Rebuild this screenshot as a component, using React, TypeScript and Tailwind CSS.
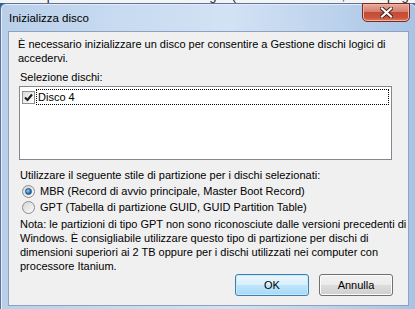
import type { ReactNode } from "react";

const FONT = "font-['Liberation_Sans',Arial,sans-serif]";

function Radio({ checked }: { checked?: boolean }) {
  return (
    <span className="flex h-[13px] w-[13px] shrink-0 items-center justify-center rounded-full border border-[#8c8c8c] bg-gradient-to-br from-[#d6d6d6] to-[#fbfbfb]">
      {checked && (
        <span className="h-[7px] w-[7px] rounded-full border border-[#1e4f7d] bg-[radial-gradient(circle_at_35%_35%,#8fd0f5,#2a76b8_60%,#1c4f86)]" />
      )}
    </span>
  );
}

function Check() {
  return (
    <span className="flex h-[13px] w-[13px] shrink-0 items-center justify-center border border-[#8e8f8f] bg-gradient-to-br from-[#dcdcdc] to-white">
      <svg width="9" height="9" viewBox="0 0 9 9">
        <path d="M1 4.5 L3.5 7 L8 1.5" fill="none" stroke="#1a1a1a" strokeWidth="2" />
      </svg>
    </span>
  );
}

function Button({ children, primary }: { children: ReactNode; primary?: boolean }) {
  return (
    <button
      className={`h-[22px] w-[74px] rounded-[3px] border text-[11px] text-black ${
        primary
          ? "border-[#3c7fb1] bg-[linear-gradient(#eaf6fd,#d9f0fc_50%,#bee6fd_50%,#a7d9f5)] shadow-[inset_0_0_0_1px_#cbe9fb]"
          : "border-[#707070] bg-[linear-gradient(#f2f2f2,#ebebeb_50%,#dddddd_50%,#cfcfcf)] shadow-[inset_0_0_0_1px_#fcfcfc]"
      }`}
    >
      {children}
    </button>
  );
}

export default function App() {
  return (
    <div className={`h-[309px] w-[415px] overflow-hidden bg-[#2c5f9c] ${FONT} text-[11px] leading-[14px] text-black`}>
      {/* bottom edge of the window behind */}
      <div className="h-[3px] overflow-hidden bg-[#f4f4f4]">
        <div className="-mt-[11px] whitespace-nowrap pl-[20px] text-[13px] leading-[14px] text-[#222]">
          Semplice &nbsp;Base &nbsp;NTFS &nbsp;&nbsp;&nbsp;&nbsp;&nbsp;&nbsp;&nbsp;&nbsp;&nbsp;Integro (Partizione di avvio, File di paging, Dump di arresto, Parti
        </div>
      </div>

      <div className="flex h-[320px] w-[417px] flex-col rounded-t-[6px] border border-[#5a7597] bg-[linear-gradient(90deg,#b9cfe9,#c8dbf1_30%,#d3e2f4_55%,#bcd2ec_80%,#a9c3e4)] px-[7px] shadow-[inset_0_0_0_1px_#e3edf9]">
        <div className="flex h-[27px] shrink-0 items-start justify-between">
          <span className="mt-[7px] pl-[1px] text-[11.5px] text-black">Inizializza disco</span>
          <div className="-mr-[1px] -mt-[1px] flex h-[19px] w-[48px] items-center justify-center rounded-b-[5px] border border-[#7a2b20] bg-[linear-gradient(#e9a99b,#d47f6e_45%,#c44a36_50%,#c8553e_80%,#d87a5e)] shadow-[inset_0_0_0_1px_#f0b4a6]">
            <svg width="13" height="11" viewBox="0 0 13 11">
              <path d="M2 1.5 L11 9.5 M11 1.5 L2 9.5" stroke="#4a1a14" strokeWidth="4" strokeLinecap="square" />
              <path d="M2 1.5 L11 9.5 M11 1.5 L2 9.5" stroke="#ffffff" strokeWidth="2.2" strokeLinecap="square" />
            </svg>
          </div>
        </div>

        <div className="flex h-[275px] shrink-0 flex-col border border-[#8ba3c1] bg-[#f0f0f0] pl-[9px] pr-[15px] pt-[5px]">
          <p className="whitespace-nowrap">
            È necessario inizializzare un disco per consentire a Gestione dischi logici di
            <br />
            accedervi.
          </p>

          <p className="mt-[5px] pl-[2px]">Selezione dischi:</p>

          <div className="ml-[1px] mt-[2px] h-[74px] w-[373px] border border-[#828790] bg-white pl-[2px] pr-[2px] pt-[2px]">
            <div className="flex items-center">
              <Check />
              <span className="ml-px flex h-[16px] flex-1 items-center border border-dotted border-black pl-[1px]">Disco 4</span>
            </div>
          </div>

          <p className="mt-[8px] pl-[2px]">Utilizzare il seguente stile di partizione per i dischi selezionati:</p>
          <div className="mt-[2px] flex items-center gap-[5px] pl-[4px]">
            <Radio checked />
            <span>MBR (Record di avvio principale, Master Boot Record)</span>
          </div>
          <div className="mt-[2px] flex items-center gap-[5px] pl-[4px]">
            <Radio />
            <span>GPT (Tabella di partizione GUID, GUID Partition Table)</span>
          </div>

          <p className="mt-[3px] whitespace-nowrap pl-[2px]">
            Nota: le partizioni di tipo GPT non sono riconosciute dalle versioni precedenti di
            <br />
            Windows. È consigliabile utilizzare questo tipo di partizione per dischi di
            <br />
            dimensioni superiori ai 2 TB oppure per i dischi utilizzati nei computer con
            <br />
            processore Itanium.
          </p>

          <div className="mt-[1px] flex justify-end gap-[10px]">
            <Button primary>OK</Button>
            <Button>Annulla</Button>
          </div>
        </div>
      </div>
    </div>
  );
}
